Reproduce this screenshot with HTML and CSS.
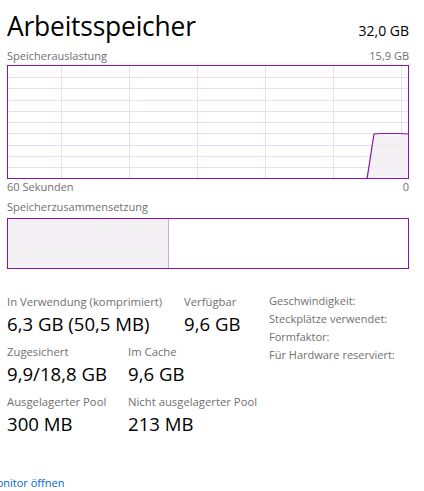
FILE: index.html
```html
<!DOCTYPE html>
<html lang="de">
<head>
<meta charset="utf-8">
<title>Arbeitsspeicher</title>
<link rel="stylesheet" href="styles.css">
</head>
<body>
<div class="page">
  <header class="head">
    <h1 class="title">Arbeitsspeicher</h1>
    <span class="total">32,0 GB</span>
  </header>
  <div class="caption"><span>Speicherauslastung</span><span>15,9 GB</span></div>
  <div class="graph">
    <svg width="400" height="112" viewBox="0 0 400 112">
      <g stroke="#ecdcef" stroke-width="1">
        <line x1="0" y1="11.5" x2="400" y2="11.5"/>
        <line x1="0" y1="22.5" x2="400" y2="22.5"/>
        <line x1="0" y1="34.5" x2="400" y2="34.5"/>
        <line x1="0" y1="45.5" x2="400" y2="45.5"/>
        <line x1="0" y1="56.5" x2="400" y2="56.5"/>
        <line x1="0" y1="67.5" x2="400" y2="67.5"/>
        <line x1="0" y1="79.5" x2="400" y2="79.5"/>
        <line x1="0" y1="90.5" x2="400" y2="90.5"/>
        <line x1="0" y1="101.5" x2="400" y2="101.5"/>
        <line x1="53.5" y1="0" x2="53.5" y2="112"/>
        <line x1="121.5" y1="0" x2="121.5" y2="112"/>
        <line x1="189.5" y1="0" x2="189.5" y2="112"/>
        <line x1="257.5" y1="0" x2="257.5" y2="112"/>
        <line x1="325.5" y1="0" x2="325.5" y2="112"/>
        <line x1="393.5" y1="0" x2="393.5" y2="112"/>
      </g>
      <path d="M359 113 L366 68 L372 67.5 L392 67.5 L400 68 L400 113 Z" fill="#f1eef2" fill-opacity="0.85"/>
      <path d="M359 113 L366 68 L372 67.5 L392 67.5 L400 68" fill="none" stroke="#8b12ae" stroke-width="1.2"/>
    </svg>
  </div>
  <div class="caption"><span>60 Sekunden</span><span>0</span></div>
  <div class="caption caption-comp"><span>Speicherzusammensetzung</span></div>
  <div class="comp">
    <div class="comp-used"></div>
  </div>

  <div class="stats">
    <div class="stats-left">
      <div class="row">
        <div class="stat w1">
          <div class="label">In Verwendung (komprimiert)</div>
          <div class="value">6,3 GB (50,5 MB)</div>
        </div>
        <div class="stat">
          <div class="label">Verfügbar</div>
          <div class="value">9,6 GB</div>
        </div>
      </div>
      <div class="row">
        <div class="stat w2">
          <div class="label">Zugesichert</div>
          <div class="value">9,9/18,8 GB</div>
        </div>
        <div class="stat">
          <div class="label">Im Cache</div>
          <div class="value">9,6 GB</div>
        </div>
      </div>
      <div class="row">
        <div class="stat w2">
          <div class="label">Ausgelagerter Pool</div>
          <div class="value">300 MB</div>
        </div>
        <div class="stat">
          <div class="label">Nicht ausgelagerter Pool</div>
          <div class="value">213 MB</div>
        </div>
      </div>
    </div>
    <dl class="props">
      <dt>Geschwindigkeit:</dt>
      <dt>Steckplätze verwendet:</dt>
      <dt>Formfaktor:</dt>
      <dt>Für Hardware reserviert:</dt>
    </dl>
  </div>
</div>
<footer class="foot">
  <a class="link" href="#">Ressourcenmonitor öffnen</a>
</footer>
</body>
</html>
```

FILE: styles.css
```css
html, body {
  margin: 0;
  padding: 0;
  background: #ffffff;
}
body {
  font-family: "Open Sans", "Noto Sans", sans-serif;
  color: #000;
  width: 424px;
  height: 491px;
  overflow: hidden;
  position: relative;
}
.page {
  padding-left: 7px;
  width: 402px;
}
.head {
  display: flex;
  justify-content: space-between;
  align-items: baseline;
  margin-top: 6px;
  height: 40px;
}
.title {
  margin: 0;
  font-size: 26.4px;
  font-weight: 400;
  line-height: 40px;
  letter-spacing: -0.2px;
}
.total {
  font-size: 14px;
}
.caption {
  display: flex;
  justify-content: space-between;
  font-size: 11px;
  line-height: 16px;
  color: #707070;
}
.head + .caption {
  margin-top: 2px;
  margin-bottom: 1px;
}
.caption-comp {
  margin-top: 4px;
  margin-bottom: 3px;
}
.graph {
  border: 1px solid #8b12ae;
  height: 112px;
  width: 400px;
}
.graph svg {
  display: block;
}
.comp {
  border: 1px solid #8b12ae;
  height: 49px;
  width: 400px;
  display: flex;
}
.comp-used {
  width: 160px;
  background: #f3f0f4;
  border-right: 1px solid #cfa6dd;
}
.stats {
  display: flex;
  margin-top: 24px;
}
.stats-left {
  display: flex;
  flex-direction: column;
  gap: 6px;
  width: 262px;
}
.row {
  display: flex;
}
.w1 { width: 177px; }
.w2 { width: 121px; }
.label {
  font-size: 11.3px;
  line-height: 18px;
  color: #707070;
  white-space: nowrap;
}
.value {
  font-size: 18.6px;
  line-height: 26px;
  white-space: nowrap;
}
.props {
  margin: -1px 0 0;
  font-size: 11px;
  line-height: 18px;
  color: #707070;
}
.props dt {
  white-space: nowrap;
}
.foot {
  position: absolute;
  left: 0;
  top: 474px;
  width: 424px;
  overflow: hidden;
}
.link {
  display: block;
  margin-left: -73px;
  font-size: 11px;
  line-height: 18px;
  color: #0066cc;
  text-decoration: none;
  white-space: nowrap;
}
```
